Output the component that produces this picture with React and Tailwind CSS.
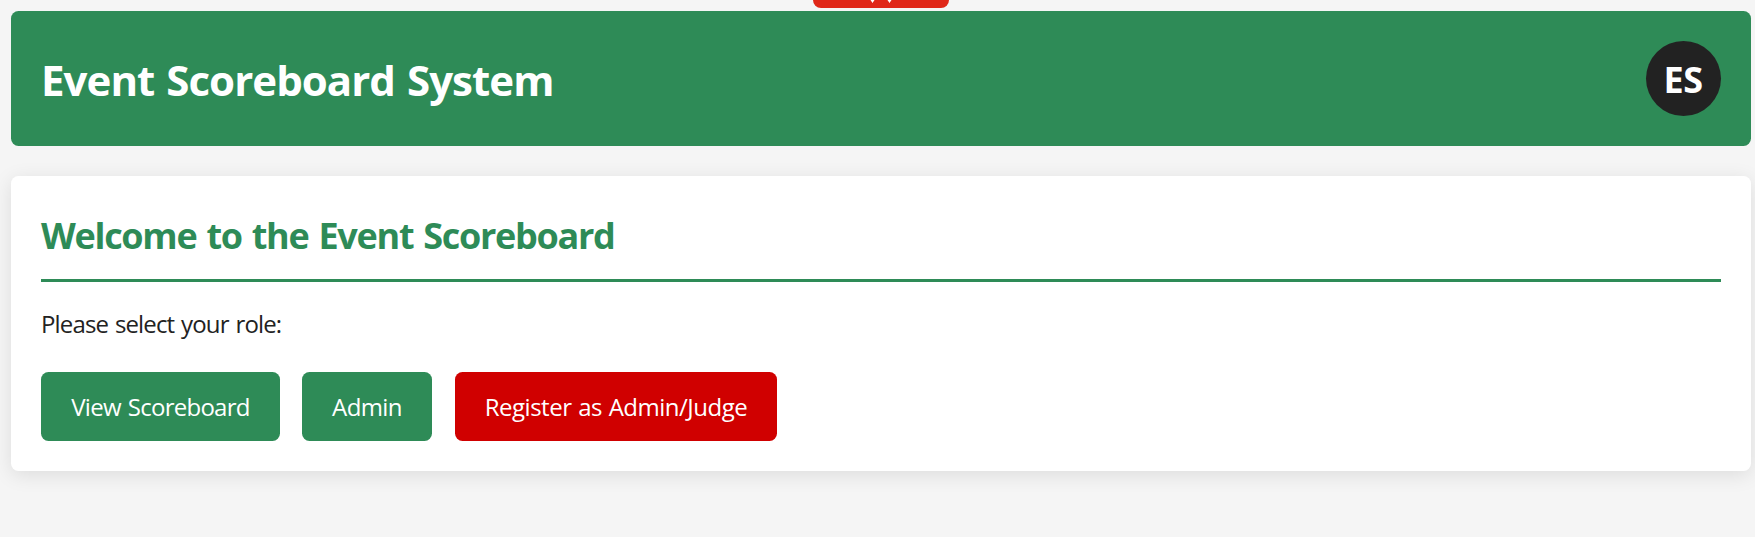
function RoleButton({ className, children }) {
  return (
    <button type="button" className={`flex h-[69px] items-center justify-center rounded-[7.5px] pt-px text-[24px] whitespace-nowrap text-white ${className}`}>
      {children}
    </button>
  );
}

export default function App() {
  return (
    <div className="relative min-h-screen overflow-hidden bg-[#f5f5f5] pt-[11px] pr-1 pl-[11px] font-['Open_Sans','Noto_Sans',sans-serif] text-[#222]">
      <div className="absolute top-0 left-[813px] h-2 w-[136px] overflow-hidden rounded-b-[9px] bg-[#e02718]">
        <svg className="block" width="136" height="8" viewBox="0 0 136 8" fill="#fff">
          <path d="M57.5 0h4l-2 3zM74.5 0h4l-2 3z" />
        </svg>
      </div>
      <header className="flex h-[135px] items-start justify-between rounded-[7.5px] bg-[#2e8b57] px-[30px] pt-[30px] text-white">
        <h1 className="mt-[9px] text-[42px] leading-[60px] font-bold tracking-[-0.95px] whitespace-nowrap [word-spacing:2px]">Event Scoreboard System</h1>
        <div className="flex size-[75px] items-center justify-center rounded-full bg-[#222] pt-[3px] pr-px text-[36px] font-bold tracking-[-0.4px]">ES</div>
      </header>
      <main className="mt-[30px] h-[295px] rounded-[7.5px] bg-white px-[30px] pt-[30px] shadow-[0_4px_20px_rgba(0,0,0,0.1)]">
        <h2 className="h-[76px] border-b-3 border-[#2e8b57] pt-[5px] text-[36px] leading-[50px] font-bold tracking-[-1.3px] text-[#2e8b57] [word-spacing:2px]">
          Welcome to the Event Scoreboard
        </h2>
        <p className="mt-[24px] text-[24px] leading-[36px] tracking-[-0.85px] [word-spacing:1.4px]">Please select your role:</p>
        <div className="mt-[30px] flex">
          <RoleButton className="w-[239px] bg-[#2e8b57] tracking-[-0.74px] [word-spacing:1.5px]">View Scoreboard</RoleButton>
          <RoleButton className="ml-[22px] w-[130px] bg-[#2e8b57] tracking-[-0.6px]">Admin</RoleButton>
          <RoleButton className="ml-[23px] w-[322px] bg-[#d00000] tracking-[-0.5px] [word-spacing:1px]">Register as Admin/Judge</RoleButton>
        </div>
      </main>
    </div>
  );
}
